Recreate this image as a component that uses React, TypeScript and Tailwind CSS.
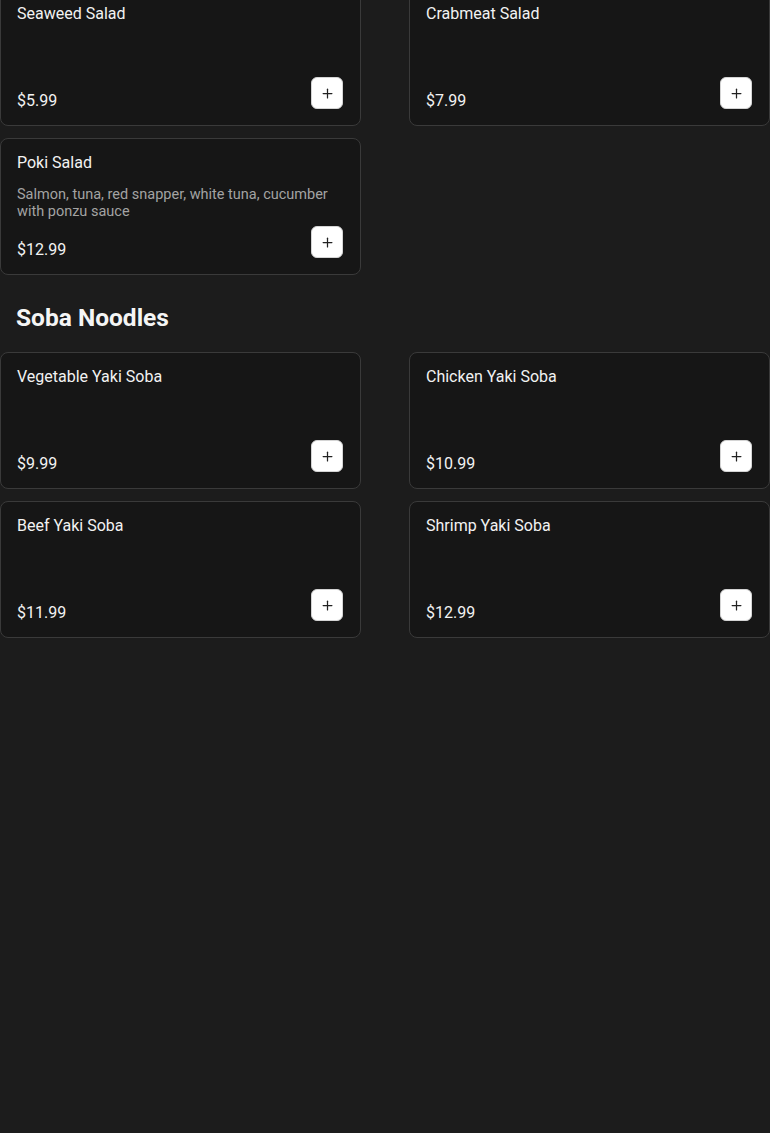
import React from "react";
import { Plus } from "lucide-react";

type Item = { name: string; price: string; desc?: string };

const salads: Item[] = [
  { name: "Seaweed Salad", price: "$5.99" },
  { name: "Crabmeat Salad", price: "$7.99" },
  { name: "Poki Salad", price: "$12.99", desc: "Salmon, tuna, red snapper, white tuna, cucumber with ponzu sauce" },
];

const soba: Item[] = [
  { name: "Vegetable Yaki Soba", price: "$9.99" },
  { name: "Chicken Yaki Soba", price: "$10.99" },
  { name: "Beef Yaki Soba", price: "$11.99" },
  { name: "Shrimp Yaki Soba", price: "$12.99" },
];

function Card({ item }: { item: Item }) {
  return (
    <div className="h-[137px] flex flex-col justify-between rounded-lg border border-[#3a3a3a] bg-[#161616] pl-4 pr-[17px] pt-4 pb-4">
      <div>
        <div className="text-base leading-none text-[#f2f2f2]">{item.name}</div>
        {item.desc && (
          <div className="mt-[15px] text-[14.5px] leading-[17px] text-[#a3a3a3]">{item.desc}</div>
        )}
      </div>
      <div className="flex items-end justify-between">
        <div className="text-base leading-none text-[#f2f2f2]">{item.price}</div>
        <button className="flex h-8 w-8 items-center justify-center rounded-md bg-white border border-[#d4d4d4]">
          <Plus size={15} strokeWidth={2} color="#222222" />
        </button>
      </div>
    </div>
  );
}

export default function App() {
  return (
    <div
      className="min-h-[1133px] bg-[#1c1c1c] overflow-hidden"
      style={{ fontFamily: "Roboto, 'Liberation Sans', sans-serif" }}
    >
      <div className="-mt-[11px]">
        <div className="grid grid-cols-2 gap-x-12 gap-y-3">
          {salads.map((it) => (
            <Card key={it.name} item={it} />
          ))}
        </div>
        <h2 className="mt-[27px] mb-[18px] px-4 text-[24.5px] leading-8 font-bold text-[#f5f5f5]">Soba Noodles</h2>
        <div className="grid grid-cols-2 gap-x-12 gap-y-3">
          {soba.map((it) => (
            <Card key={it.name} item={it} />
          ))}
        </div>
      </div>
    </div>
  );
}
